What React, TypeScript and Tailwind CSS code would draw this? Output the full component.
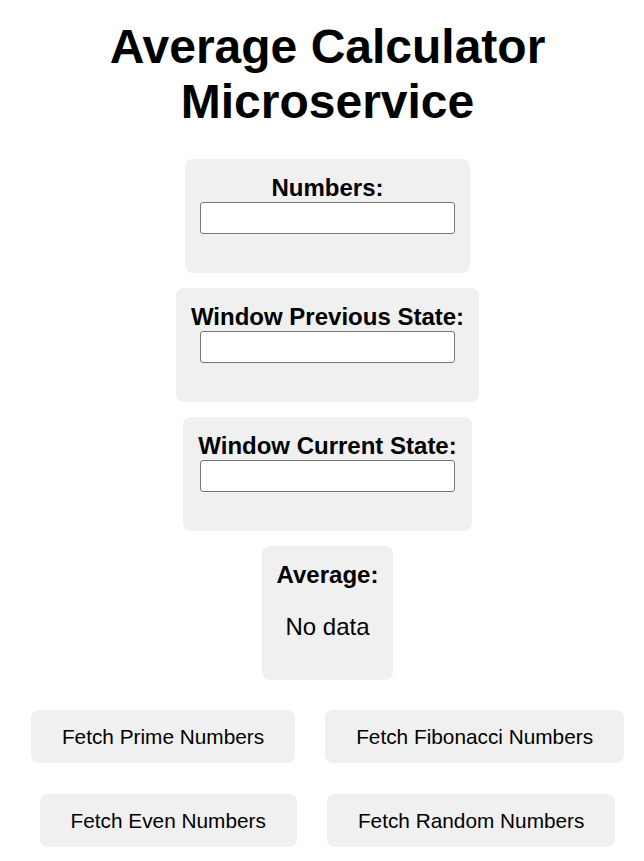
import React from 'react';

const fields = ['Numbers:', 'Window Previous State:', 'Window Current State:'];
const buttons = [
  ['Fetch Prime Numbers', 'Fetch Fibonacci Numbers'],
  ['Fetch Even Numbers', 'Fetch Random Numbers'],
];

export default function App() {
  return (
    <div className="min-h-screen bg-white text-black font-['Liberation_Sans',Arial,sans-serif] pl-[11px] flex flex-col items-center">
      <h1 className="mt-[19px] mb-[30px] text-[48px] leading-[55px] font-bold text-center">
        Average Calculator Microservice
      </h1>

      <div className="flex flex-col items-center gap-[15px]">
        {fields.map((f) => (
          <div key={f} className="flex flex-col items-center bg-[#f0f0f0] rounded-lg p-[15px]">
            <label className="text-[24px] leading-[28px] font-bold">{f}</label>
            <input
              type="text"
              className="w-[255px] h-[32px] mb-[24px] bg-white border border-[#767676] rounded-[3px] outline-none"
            />
          </div>
        ))}

        <div className="flex flex-col items-center bg-[#f0f0f0] rounded-lg p-[15px]">
          <h3 className="text-[24px] leading-[28px] font-bold">Average:</h3>
          <p className="my-[24px] text-[24px] leading-[28px]">No data</p>
        </div>
      </div>

      <div className="mt-[30px] flex flex-col items-center gap-[31px]">
        {buttons.map((row, i) => (
          <div key={i} className="flex justify-center gap-[30px]">
            {row.map((b) => (
              <button
                key={b}
                className="h-[53px] px-[31px] bg-[#f0f0f0] rounded-lg text-[20.8px] leading-[24px] text-black whitespace-nowrap"
              >
                {b}
              </button>
            ))}
          </div>
        ))}
      </div>
    </div>
  );
}
